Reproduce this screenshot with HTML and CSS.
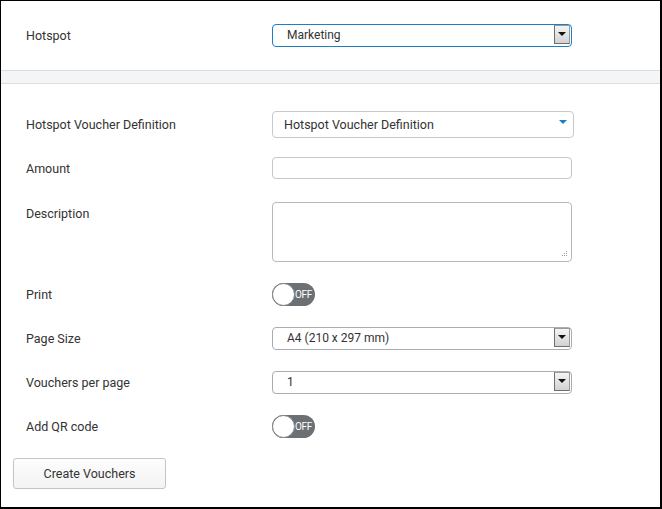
FILE: index.html
```html
<!DOCTYPE html>
<html>
<head>
<meta charset="utf-8">
<link rel="stylesheet" href="styles.css">
</head>
<body>
<div class="frame">
  <section class="top">
    <div class="row">
      <div class="label">Hotspot</div>
      <div class="select select-focus">
        <span class="select-text">Marketing</span>
        <span class="arrow-box"><span class="tri"></span></span>
      </div>
    </div>
  </section>
  <div class="band"></div>
  <section class="form">
    <div class="row">
      <div class="label">Hotspot Voucher Definition</div>
      <div class="fancy-select">
        <span class="fancy-text">Hotspot Voucher Definition</span>
        <span class="caret"></span>
      </div>
    </div>
    <div class="row">
      <div class="label">Amount</div>
      <div class="input"></div>
    </div>
    <div class="row row-top">
      <div class="label label-top">Description</div>
      <div class="textarea">
        <svg class="grip" width="7" height="7" viewBox="0 0 7 7">
          <rect x="5" y="0" width="1" height="1" fill="#9aa0a6"/>
          <rect x="3" y="2" width="1" height="1" fill="#9aa0a6"/>
          <rect x="5" y="2" width="1" height="1" fill="#9aa0a6"/>
          <rect x="1" y="4" width="1" height="1" fill="#9aa0a6"/>
          <rect x="3" y="4" width="1" height="1" fill="#9aa0a6"/>
          <rect x="5" y="4" width="1" height="1" fill="#9aa0a6"/>
        </svg>
      </div>
    </div>
    <div class="row">
      <div class="label">Print</div>
      <div class="toggle"><span class="knob"></span><span class="off">OFF</span></div>
    </div>
    <div class="row">
      <div class="label">Page Size</div>
      <div class="select">
        <span class="select-text">A4 (210 x 297 mm)</span>
        <span class="arrow-box"><span class="tri"></span></span>
      </div>
    </div>
    <div class="row">
      <div class="label">Vouchers per page</div>
      <div class="select">
        <span class="select-text">1</span>
        <span class="arrow-box"><span class="tri"></span></span>
      </div>
    </div>
    <div class="row">
      <div class="label">Add QR code</div>
      <div class="toggle"><span class="knob"></span><span class="off">OFF</span></div>
    </div>
    <div class="actions">
      <button class="btn">Create Vouchers</button>
    </div>
  </section>
</div>
</body>
</html>
```

FILE: styles.css
```css
* { box-sizing: border-box; }
html, body { margin: 0; padding: 0; background: #fff; }
body {
  font-family: Roboto, "Liberation Sans", sans-serif;
  font-size: 12.5px;
  color: #333;
}
.frame {
  width: 662px;
  height: 509px;
  border-top: 1px solid #000;
  border-left: 1px solid #000;
  border-right: 2px solid #000;
  border-bottom: 2px solid #000;
  overflow: hidden;
}
.top {
  padding: 12px 0 13px 25px;
}
.band {
  height: 14px;
  background: #f4f5f6;
  border-top: 1px solid #dcdddf;
  border-bottom: 1px solid #dcdddf;
}
.form {
  padding: 18px 0 0 25px;
}
.row {
  display: flex;
  align-items: center;
  height: 44px;
}
.row-top {
  align-items: flex-start;
  height: 82px;
}
.label {
  width: 246px;
  line-height: 20px;
  padding-top: 2px;
  flex: none;
}
.label-top { margin-top: 12px; }

.select {
  display: flex;
  align-items: flex-start;
  width: 300px;
  height: 23px;
  border: 1px solid #a9adb2;
  border-radius: 4px;
  padding: 0 1px 0 14px;
  background: #fff;
}
.select-focus { border-color: #1b7fc6; }
.select-text {
  flex: 1;
  line-height: 21px;
  font-size: 12px;
}
.arrow-box {
  width: 16px;
  height: 19px;
  border: 1px solid #6f6f6f;
  border-top-color: #9a9a9a;
  border-right-color: #9a9a9a;
  background: linear-gradient(#f4f4f4, #d2d2d2);
  display: flex;
  align-items: center;
  justify-content: center;
}
.tri {
  width: 0;
  height: 0;
  border-left: 4px solid transparent;
  border-right: 4px solid transparent;
  border-top: 4px solid #111;
}

.fancy-select {
  display: flex;
  align-items: center;
  width: 302px;
  height: 27px;
  border: 1px solid #c6cacf;
  border-radius: 4px;
  padding: 2px 6px 0 11px;
}
.fancy-text { flex: 1; line-height: 20px; }
.caret {
  width: 0;
  height: 0;
  border-left: 4px solid transparent;
  border-right: 4px solid transparent;
  border-top: 4px solid #1b7fc6;
  margin-top: -6px;
}

.input {
  width: 300px;
  height: 22px;
  border: 1px solid #c3c7cb;
  border-radius: 4px;
  margin-top: 0;
}
.textarea {
  position: relative;
  width: 300px;
  height: 60px;
  margin-top: 12px;
  border: 1px solid #b5b9bd;
  border-radius: 4px;
}
.grip {
  position: absolute;
  right: 3px;
  bottom: 3px;
}

.toggle {
  position: relative;
  width: 43px;
  height: 23px;
  border-radius: 12px;
  background: #6b7075;
  margin-top: 0;
}
.knob {
  position: absolute;
  left: 0;
  top: 0;
  width: 23px;
  height: 23px;
  border-radius: 50%;
  background: #fff;
  border: 1px solid #7c8086;
}
.off {
  position: absolute;
  right: 3px;
  top: 0;
  line-height: 23px;
  font-size: 10px;
  color: #fff;
  letter-spacing: -0.3px;
}

.actions {
  padding-top: 10px;
  margin-left: -13px;
}
.btn {
  width: 153px;
  height: 31px;
  border: 1px solid #c4c4c4;
  border-radius: 3px;
  background: linear-gradient(#fdfdfd, #f3f3f3);
  font-family: Roboto, "Liberation Sans", sans-serif;
  font-size: 12.5px;
  color: #333;
  padding: 0;
}
```
